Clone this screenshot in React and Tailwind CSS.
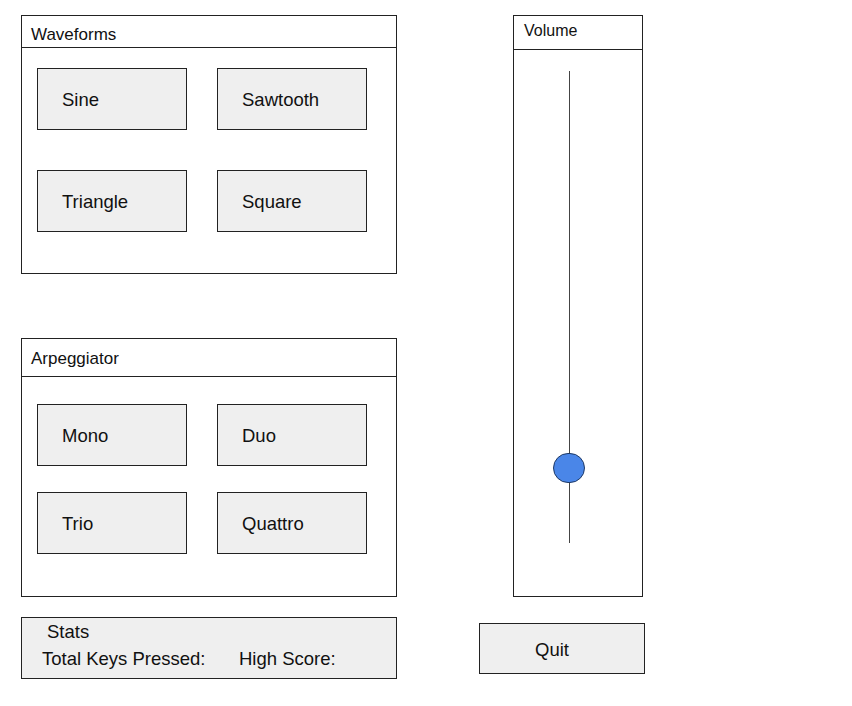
import React from "react";

const font = { fontFamily: '"Liberation Sans", Arial, sans-serif' };

const Btn = ({ label }) => (
  <div className="w-[150px] h-[62px] border border-[#222] bg-[#efefef] flex items-center pl-[24px] pt-[2px] text-[18.5px] leading-[20px] text-[#111]">
    {label}
  </div>
);

const Panel = ({ title, headerH, titlePt, rowGap, topGap, children }) => (
  <div className="w-[376px] h-[259px] border border-[#222] bg-white flex flex-col">
    <div className={`border-b border-[#222] px-[9px] text-[17px] leading-[20px] text-[#111] ${headerH} ${titlePt}`}>
      {title}
    </div>
    <div className={`flex flex-col pl-[15px] ${topGap} ${rowGap}`}>{children}</div>
  </div>
);

export default function App() {
  return (
    <div className="w-[852px] h-[706px] bg-white flex pt-[15px] pl-[21px]" style={font}>
      {/* left column */}
      <div className="flex flex-col w-[376px]">
        <Panel title="Waveforms" headerH="h-[32px]" titlePt="pt-[9px]" topGap="pt-[20px]" rowGap="gap-[40px]">
          <div className="flex gap-[30px]">
            <Btn label="Sine" />
            <Btn label="Sawtooth" />
          </div>
          <div className="flex gap-[30px]">
            <Btn label="Triangle" />
            <Btn label="Square" />
          </div>
        </Panel>

        <div className="mt-[64px]">
          <Panel title="Arpeggiator" headerH="h-[38px]" titlePt="pt-[10px]" topGap="pt-[27px]" rowGap="gap-[26px]">
            <div className="flex gap-[30px]">
              <Btn label="Mono" />
              <Btn label="Duo" />
            </div>
            <div className="flex gap-[30px]">
              <Btn label="Trio" />
              <Btn label="Quattro" />
            </div>
          </Panel>
        </div>

        <div className="mt-[20px] w-[376px] h-[62px] border border-[#222] bg-[#efefef] pt-[4px] text-[18.5px] leading-[20px] text-[#111]">
          <div className="pl-[25px]">Stats</div>
          <div className="flex mt-[7px] pl-[20px]">
            <span className="w-[197px]">Total Keys Pressed:</span>
            <span>High Score:</span>
          </div>
        </div>
      </div>

      {/* right column */}
      <div className="flex flex-col ml-[82px]">
        <div className="ml-[34px] w-[130px] h-[582px] border border-[#222] bg-white flex flex-col">
          <div className="h-[34px] border-b border-[#222] px-[10px] pt-[5px] text-[16px] leading-[20px] text-[#111]">
            Volume
          </div>
          <div className="relative pl-[55px] pt-[21px]">
            <div className="w-px h-[472px] bg-[#444]" />
            <div className="absolute left-[39px] top-[403px] w-[32px] h-[30px] rounded-full bg-[#4a86e8] border border-[#1f3a66]" />
          </div>
        </div>

        <div className="mt-[26px] w-[166px] h-[51px] border border-[#222] bg-[#efefef] flex items-center pl-[55px] pt-[3px] text-[18.5px] leading-[20px] text-[#111]">
          Quit
        </div>
      </div>
    </div>
  );
}
